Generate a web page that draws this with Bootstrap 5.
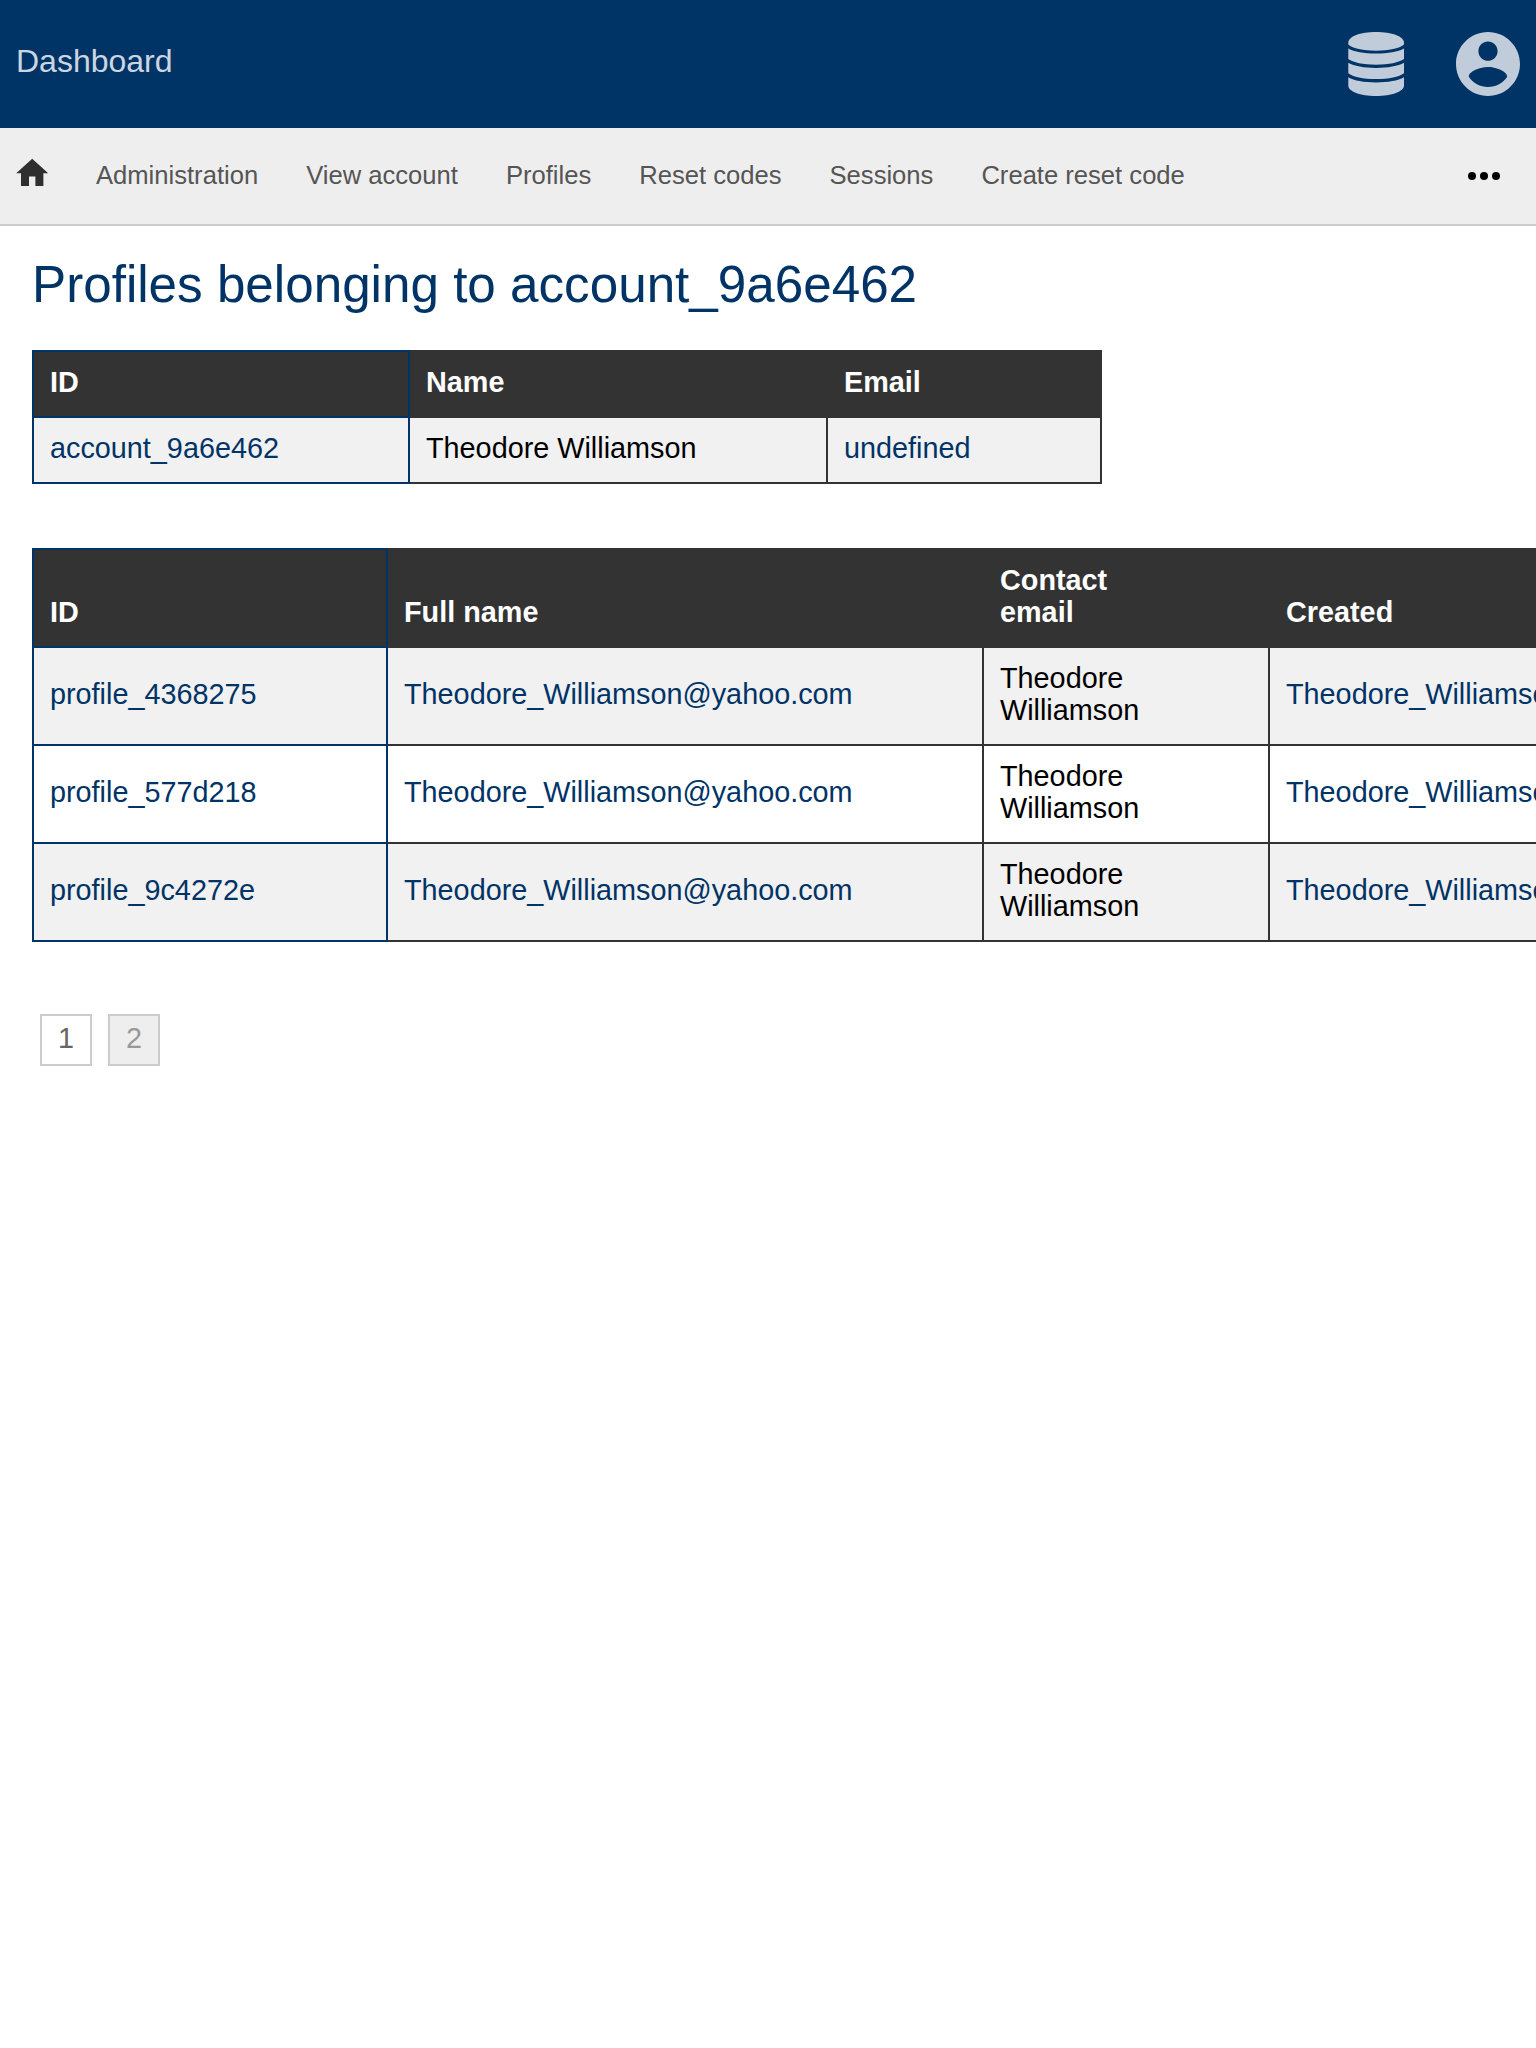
<!DOCTYPE html>
<html lang="en">
<head>
<meta charset="utf-8">
<meta name="viewport" content="width=device-width, initial-scale=1">
<title>Dashboard</title>
<link href="https://cdn.jsdelivr.net/npm/bootstrap@5.3.0/dist/css/bootstrap.min.css" rel="stylesheet">
<style>
  body { font-family: "Liberation Sans", Arial, sans-serif; font-size: 32px; line-height: normal; color: #000; background: #fff; }
  a { text-decoration: none; }
  .topbar { height: 128px; background: #003366; padding: 0 16px; }
  .topbar .brand { color: #ccd6e0; line-height: 36px; margin-top: -6px; }
  .topbar svg { display: block; fill: #c0ccd9; }
  .top-icons { gap: 52px; }
  .subnav { height: 98px; background: #eee; border-bottom: 2px solid #ccc; font-size: 25.6px; padding: 0 36px 0 12.8px; }
  .subnav .nav-link { color: #555; padding: 0; line-height: 30px; }
  .links { gap: 48px; margin: -2px 0 0 44.8px; }
  .home-icon { width: 38.4px; height: 38.4px; fill: #2f2f2f; margin-top: -5.8px; }
  .dots { width: 32px; height: 8px; display: block; }
  main { padding: 0 32px; }
  h1.page-title { font-size: 51.2px; font-weight: 400; color: #003366; line-height: 60px; margin: 29px 0 35px; }
  .grid { border-collapse: collapse; table-layout: fixed; font-size: 28.8px; line-height: 32px; }
  .grid th, .grid td { border: 2px solid #333; padding: 14px 16px 18px; vertical-align: middle; }
  .grid th { background: #333; color: #fff; vertical-align: bottom; }
  .grid th:first-child, .grid td:first-child { border-color: #003366; }
  .grid tbody tr:nth-child(odd) { background: #f1f1f1; }
  .grid a { color: #003366; }
  .accounts { width: 1070px; margin-bottom: 64px; }
  .profiles { width: 1834px; }
  .pager { gap: 16px; padding: 0 8px; margin-top: 72px; font-size: 28.8px; }
  .pager a { width: 52px; height: 52px; border: 2px solid #ccc; color: #999; background: #eee; line-height: 44px; text-align: center; }
  .pager a.current { background: #fff; color: #666; }
</style>
</head>
<body class="overflow-x-hidden">
<header class="topbar d-flex align-items-center justify-content-between">
  <a class="brand" href="#">Dashboard</a>
  <div class="top-icons d-flex align-items-center">
    <svg width="56" height="64" viewBox="0 0 56 64"><path d="M.3 10.700C.3 4.500 12 0 28 0S56 4.500 56 10.700V12.500C51 16.500 41 18.700 28 18.700S5 16.500 .3 12.500Z"/><path d="M.3 16.500C6 19.700 16 21.500 28 21.500S50 19.700 56 16.500V27C51 30.500 41 32.700 28 32.700S5 30.500 .3 27Z"/><path d="M.3 30.800C6 34 16 36 28 36S50 34 56 30.800V41.200C51 45 41 47.100 28 47.100S5 45 .3 41.200Z"/><path d="M.3 45.200C6 48.600 16 50.400 28 50.400S50 48.600 56 45.200V53.500C56 59.500 44 64 28 64S.3 59.500 .3 53.500Z"/></svg>
    <svg width="64" height="64" viewBox="2 2 20 20"><path d="M12 2C6.480 2 2 6.480 2 12s4.480 10 10 10 10-4.480 10-10S17.520 2 12 2zm0 3c1.660 0 3 1.340 3 3s-1.340 3-3 3-3-1.340-3-3 1.340-3 3-3zm0 14.200c-2.500 0-4.710-1.280-6-3.220.03-1.990 4-3.080 6-3.080 1.990 0 5.970 1.090 6 3.080-1.290 1.940-3.500 3.220-6 3.220z"/></svg>
  </div>
</header>
<nav class="subnav d-flex align-items-center">
  <a href="#" aria-label="Home" class="d-flex"><svg class="home-icon" viewBox="0 0 24 24"><path d="M10 20v-6h4v6h5v-8h3L12 3 2 12h3v8z"/></svg></a>
  <div class="links nav flex-nowrap">
    <a class="nav-link" href="#">Administration</a>
    <a class="nav-link" href="#">View account</a>
    <a class="nav-link" href="#">Profiles</a>
    <a class="nav-link" href="#">Reset codes</a>
    <a class="nav-link" href="#">Sessions</a>
    <a class="nav-link" href="#">Create reset code</a>
  </div>
  <a href="#" class="ms-auto" aria-label="More"><svg class="dots" viewBox="0 0 32 8"><circle cx="4" cy="4" r="4"/><circle cx="16" cy="4" r="4"/><circle cx="28" cy="4" r="4"/></svg></a>
</nav>
<main>
  <h1 class="page-title">Profiles belonging to account_9a6e462</h1>
  <table class="grid accounts">
    <colgroup><col style="width:376px"><col style="width:418px"><col></colgroup>
    <thead><tr><th>ID</th><th>Name</th><th>Email</th></tr></thead>
    <tbody><tr><td><a href="#">account_9a6e462</a></td><td>Theodore Williamson</td><td><a href="#">undefined</a></td></tr></tbody>
  </table>
  <table class="grid profiles">
    <colgroup><col style="width:354px"><col style="width:596px"><col style="width:286px"><col></colgroup>
    <thead><tr><th>ID</th><th>Full name</th><th>Contact<br>email</th><th>Created</th></tr></thead>
    <tbody>
      <tr><td><a href="#">profile_4368275</a></td><td><a href="#">Theodore_Williamson@yahoo.com</a></td><td>Theodore Williamson</td><td><a href="#">Theodore_Williamson@yahoo.com</a></td></tr>
      <tr><td><a href="#">profile_577d218</a></td><td><a href="#">Theodore_Williamson@yahoo.com</a></td><td>Theodore Williamson</td><td><a href="#">Theodore_Williamson@yahoo.com</a></td></tr>
      <tr><td><a href="#">profile_9c4272e</a></td><td><a href="#">Theodore_Williamson@yahoo.com</a></td><td>Theodore Williamson</td><td><a href="#">Theodore_Williamson@yahoo.com</a></td></tr>
    </tbody>
  </table>
  <nav class="pager d-flex" aria-label="Pages"><a class="current" href="#">1</a><a href="#">2</a></nav>
</main>
<script src="https://cdn.jsdelivr.net/npm/bootstrap@5.3.0/dist/js/bootstrap.bundle.min.js"></script>
</body>
</html>
